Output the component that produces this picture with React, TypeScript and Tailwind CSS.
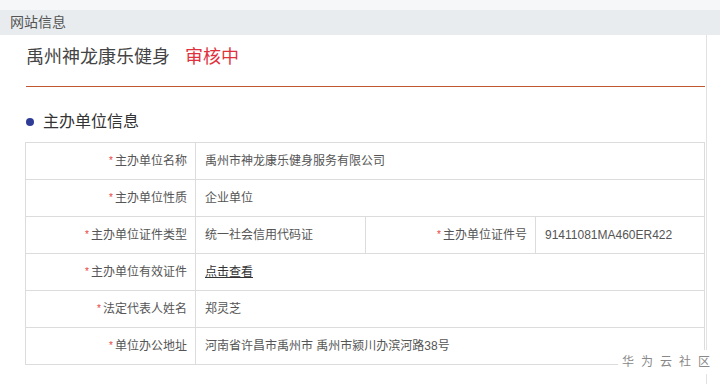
import React from 'react';

type Row = { label: string; value?: React.ReactNode; label2?: string; value2?: string };

const ROWS: Row[] = [
  { label: '主办单位名称', value: '禹州市神龙康乐健身服务有限公司' },
  { label: '主办单位性质', value: '企业单位' },
  { label: '主办单位证件类型', value: '统一社会信用代码证', label2: '主办单位证件号', value2: '91411081MA460ER422' },
  { label: '主办单位有效证件', value: <a className="underline text-[#333]">点击查看</a> },
  { label: '法定代表人姓名', value: '郑灵芝' },
  { label: '单位办公地址', value: '河南省许昌市禹州市 禹州市颍川办滨河路38号' },
];

const Label = ({ text }: { text: string }) => (
  <td className="border border-[#dcdcdc] h-[37px] pr-[8px] text-right align-middle">
    <span className="text-[#e8423c] text-[10px] mr-[2px] relative top-[-1px]">*</span>
    {text}
  </td>
);

export default function App() {
  return (
    <div
      className="relative w-[720px] h-[384px] overflow-hidden bg-white text-[#555]"
      style={{ fontFamily: '"Liberation Sans", "Noto Sans CJK SC", sans-serif' }}
    >
      <div className="h-[10px] bg-[#f6f7f8]" />
      <div className="h-[25px] bg-[#e8ecef] pl-[10px] text-[14px] leading-[25px] text-[#555]">网站信息</div>

      <div className="w-[707px] border-r border-[#e2e2e2]">
        <div className="h-[42px] pt-[2px] flex items-center pl-[26px] text-[18px]">
          <span className="text-[#444]">禹州神龙康乐健身</span>
          <span className="ml-[15px] text-[#e0323e]">审核中</span>
        </div>

        <div className="mt-[9px] ml-[26px] w-[679px] border-t border-[#c0582e]" />

        <div className="mt-[25px] ml-[25px] h-[20px] flex items-center gap-[9px]">
          <span className="w-[8px] h-[8px] rounded-full bg-[#2f3c96] ml-[1px]" />
          <span className="text-[16px] text-[#333]">主办单位信息</span>
        </div>

        <table className="mt-[10px] ml-[25px] w-[679px] table-fixed border-collapse text-[12px]">
          <colgroup>
            <col className="w-[170px]" />
            <col className="w-[170px]" />
            <col className="w-[170px]" />
            <col className="w-[169px]" />
          </colgroup>
          <tbody>
            {ROWS.map((r) => (
              <tr key={r.label}>
                <Label text={r.label} />
                {r.label2 ? (
                  <>
                    <td className="border border-[#dcdcdc] pl-[9px]">{r.value}</td>
                    <Label text={r.label2} />
                    <td className="border border-[#dcdcdc] pl-[9px]">{r.value2}</td>
                  </>
                ) : (
                  <td colSpan={3} className="border border-[#dcdcdc] pl-[9px]">{r.value}</td>
                )}
              </tr>
            ))}
          </tbody>
        </table>
        <div className="h-[20px]" />
      </div>

      <div className="absolute left-[618px] top-[350px] w-[102px] h-[24px] bg-white pl-[4px] whitespace-nowrap text-[12px] leading-[24px] tracking-[7px] text-[#888]">
        华为云社区
      </div>
    </div>
  );
}
